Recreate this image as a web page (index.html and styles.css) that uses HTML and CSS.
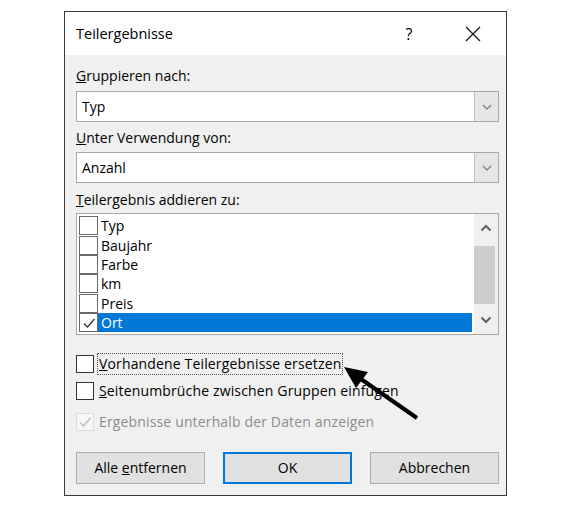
FILE: index.html
```html
<!DOCTYPE html>
<html lang="de">
<head>
<meta charset="utf-8">
<title>Teilergebnisse</title>
<link rel="stylesheet" href="styles.css">
</head>
<body>
<div class="dialog">
  <div class="titlebar">
    <span class="title">Teilergebnisse</span>
    <span class="help">?</span>
    <span class="close">
      <svg width="16" height="16" viewBox="0 0 16 16"><path d="M1 1 L15 15 M15 1 L1 15" stroke="#1a1a1a" stroke-width="1.3" fill="none"/></svg>
    </span>
  </div>
  <div class="content">
    <div class="label l1"><u>G</u>ruppieren nach:</div>
    <div class="combo c1">
      <span class="combo-text">Typ</span>
      <span class="combo-btn"><svg width="10" height="6" viewBox="0 0 10 6"><path d="M1 1 L5 5 L9 1" stroke="#7a7a7a" stroke-width="1.2" fill="none"/></svg></span>
    </div>
    <div class="label l2"><u>U</u>nter Verwendung von:</div>
    <div class="combo c2">
      <span class="combo-text">Anzahl</span>
      <span class="combo-btn"><svg width="10" height="6" viewBox="0 0 10 6"><path d="M1 1 L5 5 L9 1" stroke="#7a7a7a" stroke-width="1.2" fill="none"/></svg></span>
    </div>
    <div class="label l3"><u>T</u>eilergebnis addieren zu:</div>
    <div class="listbox">
      <div class="rows">
        <div class="row"><span class="lbox"></span><span class="ltext">Typ</span></div>
        <div class="row"><span class="lbox"></span><span class="ltext">Baujahr</span></div>
        <div class="row"><span class="lbox"></span><span class="ltext">Farbe</span></div>
        <div class="row"><span class="lbox"></span><span class="ltext">km</span></div>
        <div class="row"><span class="lbox"></span><span class="ltext">Preis</span></div>
        <div class="row sel"><span class="lbox"><svg width="16" height="16" viewBox="0 0 16 16"><path d="M3 8.5 L6.5 12 L13.5 4" stroke="#333" stroke-width="1.3" fill="none"/></svg></span><span class="ltext">Ort</span></div>
      </div>
      <div class="scrollbar">
        <div class="sb-arrow"><svg width="12" height="8" viewBox="0 0 12 8"><path d="M1.5 6.5 L6 2 L10.5 6.5" stroke="#606060" stroke-width="2" fill="none"/></svg></div>
        <div class="sb-track"><div class="sb-thumb"></div></div>
        <div class="sb-arrow"><svg width="12" height="8" viewBox="0 0 12 8"><path d="M1.5 1.5 L6 6 L10.5 1.5" stroke="#606060" stroke-width="2" fill="none"/></svg></div>
      </div>
    </div>
    <div class="check ch1"><span class="box"></span><span class="ctext focus"><u>V</u>orhandene Teilergebnisse ersetzen</span></div>
    <div class="check ch2"><span class="box"></span><span class="ctext"><u>S</u>eitenumbrüche zwischen Gruppen einfügen</span></div>
    <div class="check ch3 disabled"><span class="box"><svg width="16" height="16" viewBox="0 0 16 16"><path d="M3 8.5 L6.5 12 L13.5 4" stroke="#bdbdbd" stroke-width="1.4" fill="none"/></svg></span><span class="ctext">Ergebnisse unterhalb der Daten anzeigen</span></div>
    <div class="buttons">
      <div class="btn">Alle <u>e</u>ntfernen</div>
      <div class="btn default">OK</div>
      <div class="btn">Abbrechen</div>
    </div>
  </div>
  <svg class="arrow" width="100" height="70" viewBox="330 360 100 70">
    <line x1="417" y1="418" x2="358" y2="377" stroke="#000" stroke-width="4"/>
    <polygon points="344,367 368,372 356,388" fill="#000"/>
  </svg>
</div>
</body>
</html>
```
FILE: styles.css
```css
body {
  margin: 0;
  background: #ffffff;
  font-family: "Open Sans", "Noto Sans", sans-serif;
  font-size: 14px;
  color: #000;
}
.dialog {
  margin: 11px 0 0 64px;
  width: 441px;
  border: 1px solid #3a3a3a;
  background: #f0f0f0;
  position: relative;
}
.titlebar {
  height: 43px;
  background: #fff;
  display: flex;
  align-items: center;
  padding-left: 11px;
}
.title {
  flex: 1;
  font-size: 14.5px;
}
.help {
  width: 16px;
  font-size: 16px;
  margin-right: 48px;
  text-align: center;
}
.close {
  width: 16px;
  height: 16px;
  margin-right: 25px;
  display: flex;
}
.content {
  padding: 0 7px 11px 11px;
  display: flex;
  flex-direction: column;
}
.label {
  height: 20px;
  line-height: 20px;
}
.l1 { margin-top: 11px; }
.l2 { margin-top: 6px; }
.l3 { margin-top: 7px; }
.combo {
  height: 29px;
  border: 1px solid #a8a8a8;
  background: #fff;
  display: flex;
  align-items: stretch;
}
.c1 { margin-top: 5px; }
.c2 { margin-top: 4px; }
.combo-text {
  flex: 1;
  padding-left: 5px;
  line-height: 29px;
}
.combo-btn {
  width: 23px;
  background: #e6e6e6;
  border-left: 1px solid #c2c2c2;
  display: flex;
  align-items: center;
  justify-content: center;
}
.listbox {
  margin-top: 3px;
  height: 120px;
  border: 1px solid #a8a8a8;
  background: #fff;
  display: flex;
}
.rows {
  flex: 1;
  padding: 2px 2px 0 2px;
  display: flex;
  flex-direction: column;
}
.row {
  height: 19.4px;
  display: flex;
  align-items: center;
}
.lbox {
  width: 17px;
  height: 17px;
  border: 1px solid #6a6a6a;
  background: #fff;
  display: flex;
  align-items: center;
  justify-content: center;
  flex: none;
}
.ltext {
  flex: 1;
  height: 19px;
  line-height: 19px;
  padding-left: 3px;
}
.row.sel .ltext {
  background: #0078d7;
  color: #fff;
}
.scrollbar {
  width: 24px;
  background: #f0f0f0;
  display: flex;
  flex-direction: column;
}
.sb-arrow {
  height: 32px;
  display: flex;
  align-items: center;
  justify-content: center;
}
.sb-track {
  flex: 1;
  padding: 4px 3px 3px 0;
  display: flex;
  flex-direction: column;
}
.sb-thumb {
  height: 58px;
  background: #cdcdcd;
}
.check {
  height: 22px;
  display: flex;
  align-items: center;
}
.ch1 { margin-top: 18px; }
.ch2 { margin-top: 5px; }
.ch3 { margin-top: 9px; }
.box {
  width: 16px;
  height: 16px;
  border: 1px solid #333;
  background: #fff;
  display: flex;
  align-items: center;
  justify-content: center;
  flex: none;
}
.ctext {
  margin-left: 3px;
  padding: 0 1px;
  line-height: 20px;
  border: 1px solid transparent;
  letter-spacing: 0.15px;
}
.ctext.focus {
  border: 1px dotted #555;
}
.disabled .box {
  border-color: #dcdcdc;
  background: #f7f7f7;
}
.disabled .ctext {
  color: #8d8d8d;
}
.buttons {
  margin-top: 19px;
  display: flex;
  justify-content: space-between;
}
.btn {
  width: 127px;
  height: 30px;
  line-height: 30px;
  text-align: center;
  background: #e1e1e1;
  border: 1px solid #adadad;
}
.btn.default {
  border: 2px solid #0078d7;
  height: 28px;
  line-height: 28px;
  width: 125px;
}
.arrow {
  position: absolute;
  left: 265px;
  top: 348px;
}
```
